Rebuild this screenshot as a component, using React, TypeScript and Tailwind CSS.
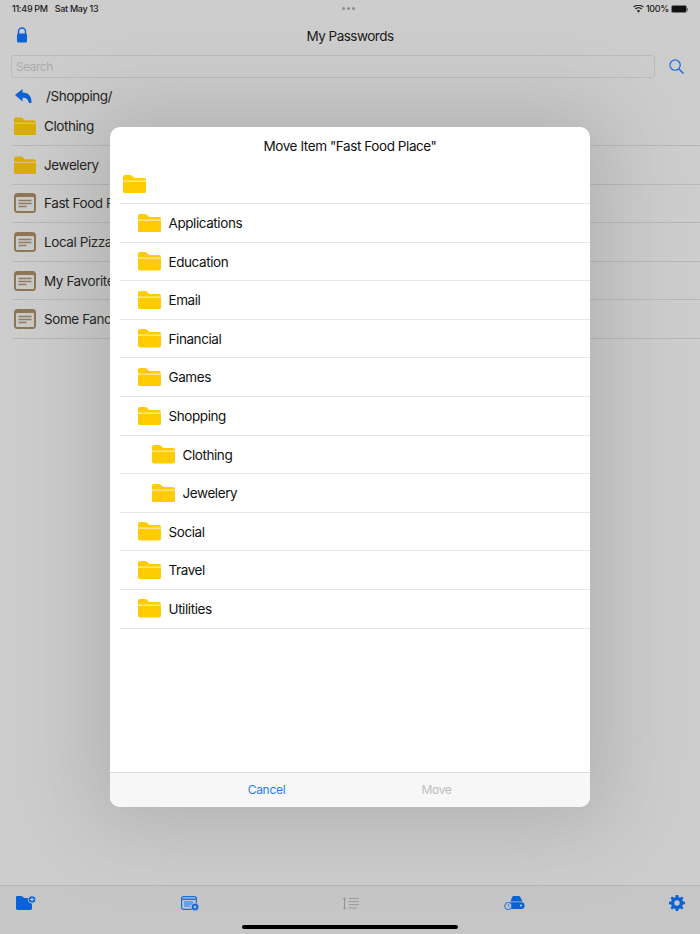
const font = { fontFamily: "Inter, 'Noto Sans', sans-serif" };

function Folder({ color = "#ffcc00", line = "#fff", className = "" }: { color?: string; line?: string; className?: string }) {
  return (
    <svg viewBox="0 0 23 18.5" className={className}>
      <path d="M0 2C0 .8.8 0 2 0h5c.9 0 1.5.3 2.1.9L11.2 3h9.8c1.2 0 2 .8 2 2V16.5c0 1.2-.8 2-2 2H2c-1.2 0-2-.8-2-2Z" fill={color} />
      <rect x="0" y="5.7" width="23" height="0.8" fill={line} />
    </svg>
  );
}

function NoteIcon({ className = "" }: { className?: string }) {
  return (
    <svg viewBox="0 0 22 20" className={className}>
      <rect x="0" y="0" width="22" height="20" rx="3.5" fill="#8f7656" />
      <rect x="2" y="4" width="18" height="14" rx="1" fill="#cbcbc8" />
      <path d="M4.5 7.5h13M4.5 10.5h13M4.5 13.5h8" stroke="#8f7c63" strokeWidth="1.3" />
    </svg>
  );
}

function Row({ icon, label }: { icon: "folder" | "note"; label: string }) {
  return (
    <div className="ml-3 flex h-[38.6px] items-center gap-2 border-b border-[#b8b8b8]">
      {icon === "folder" ? (
        <Folder color="#d9ae08" line="#d8d2b0" className="ml-[2px] h-[18.5px] w-[22px] shrink-0" />
      ) : (
        <NoteIcon className="ml-[2px] h-[20px] w-[22px] shrink-0" />
      )}
      <span className="text-[13.5px] tracking-[-0.42px] text-[#1c1c1c]">{label}</span>
    </div>
  );
}

function ModalRow({ indent, label }: { indent: number; label: string }) {
  const pad = indent === 0 ? "pl-[3px]" : indent === 1 ? "pl-[18px]" : "pl-[32px]";
  return (
    <div className={`flex h-[38.6px] items-center gap-[7.5px] border-b border-[#e6e6e6] ${pad}`}>
      <Folder className="h-[18.5px] w-[23px] shrink-0" />
      <span className="pt-[0.6px] text-[13.5px] tracking-[-0.42px] text-[#111]">{label}</span>
    </div>
  );
}

const folders: [number, string][] = [
  [1, "Applications"],
  [1, "Education"],
  [1, "Email"],
  [1, "Financial"],
  [1, "Games"],
  [1, "Shopping"],
  [2, "Clothing"],
  [2, "Jewelery"],
  [1, "Social"],
  [1, "Travel"],
  [1, "Utilities"],
];

export default function App() {
  return (
    <div className="relative flex h-[934px] w-[700px] flex-col overflow-hidden bg-[#cdcdcd]" style={font}>
      <div className="flex h-[17px] items-center justify-between pl-3 pr-[12px] pt-[1px] text-[9px] font-medium tracking-[-0.3px] text-[#222]">
        <div className="flex gap-[7px]">
          <span>11:49 PM</span>
          <span>Sat May 13</span>
        </div>
        <div className="flex items-center gap-[2px]">
          <svg viewBox="0 0 16 12" className="h-[8px] w-[11px]">
            <path d="M8 11.5 5.6 8.7a3.4 3.4 0 0 1 4.8 0ZM3.9 6.9a6 6 0 0 1 8.2 0l1.3-1.5a8 8 0 0 0-10.8 0ZM.9 3.8a10.4 10.4 0 0 1 14.2 0L16 2.4A12.4 12.4 0 0 0 0 2.4Z" fill="#222" />
          </svg>
          <span>100%</span>
          <div className="flex items-center">
            <div className="h-[8px] w-[16px] rounded-[2px] border border-[#777] bg-[#111]" />
            <div className="h-[3px] w-[1px] bg-[#777]" />
          </div>
        </div>
      </div>

      <div className="relative flex h-[38px] items-center justify-center px-4">
        <svg viewBox="0 0 12 16" className="absolute left-[16px] top-[10px] h-[16px] w-[12px]">
          <path d="M2.5 7V4.5a3.5 3.5 0 0 1 7 0V7" fill="none" stroke="#0b62d6" strokeWidth="1.4" />
          <rect x="1" y="6.5" width="10" height="9" rx="1.5" fill="#0b62d6" />
        </svg>
        <span className="text-[13.5px] tracking-[-0.5px] text-[#1a1a1a]">My Passwords</span>
      </div>

      <div className="flex items-center pl-[11px] pr-[14px]">
        <div className="flex h-[23px] w-[644px] items-center rounded-[3px] border border-[#bcbcbc] px-[4px] text-[12px] tracking-[-0.5px] text-[#acacac]">
          Search
        </div>
        <svg viewBox="0 0 16 16" className="ml-[14px] h-[15px] w-[15px]">
          <circle cx="6.5" cy="6.5" r="5.5" fill="none" stroke="#1a6fe0" strokeWidth="1.3" />
          <path d="M10.6 10.6 15.4 15.4" stroke="#1a6fe0" strokeWidth="1.6" />
        </svg>
      </div>

      <div className="mt-[4px] flex h-[27px] items-center pl-[15px]">
        <svg viewBox="0 0 17 14" className="h-[14px] w-[17px]">
          <path d="M7.5 0 0 6l7.5 6.5V8.8c3.6-.2 5.6 1.4 6.5 5.2h2.5C16.8 7.5 13.5 3.6 7.5 3.6Z" fill="#0b62d6" />
        </svg>
        <span className="ml-[14px] pt-[1px] text-[13.5px] tracking-[-0.45px] text-[#1c1c1c]">/Shopping/</span>
      </div>

      <div className="mt-[-1.5px]">
        <Row icon="folder" label="Clothing" />
        <Row icon="folder" label="Jewelery" />
        <Row icon="note" label="Fast Food Place" />
        <Row icon="note" label="Local Pizza" />
        <Row icon="note" label="My Favorite" />
        <Row icon="note" label="Some Fancy" />
      </div>

      <div className="mt-auto h-[49px] border-t border-[#b6b6b6] bg-[#c6c6c6]">
        <div className="flex h-[34px] items-center justify-between pl-[16px] pr-[15px]">
          <svg viewBox="0 0 20 14" className="h-[14px] w-[20px]">
            <path d="M0 1.2C0 .5.5 0 1.2 0h4c.6 0 1 .2 1.4.6L8 2h6.6c.8 0 1.4.6 1.4 1.4V12.6c0 .8-.6 1.4-1.4 1.4H1.4C.6 14 0 13.4 0 12.6Z" fill="#0b62d6" />
            <circle cx="16" cy="3.5" r="3.8" fill="#0b62d6" stroke="#c6c6c6" strokeWidth="0.9" />
            <path d="M14 3.5h4M16 1.5v4" stroke="#d5e3f5" strokeWidth="0.9" />
          </svg>
          <svg viewBox="0 0 18 15" className="h-[15px] w-[18px]">
            <rect x="0.6" y="0.6" width="14.8" height="12.8" rx="2" fill="none" stroke="#1a6fe0" strokeWidth="1.2" />
            <path d="M1 3.2h14" stroke="#1a6fe0" strokeWidth="1.4" />
            <path d="M3 6h9M3 8h9M3 10h6" stroke="#1a6fe0" strokeWidth="0.9" />
            <circle cx="14" cy="11" r="3.8" fill="#0b62d6" stroke="#c6c6c6" strokeWidth="0.7" />
            <path d="M12.2 11h3.6M14 9.2v3.6" stroke="#d5e3f5" strokeWidth="0.8" />
          </svg>
          <svg viewBox="0 0 16 13" className="h-[13px] w-[16px]">
            <path d="M1.5 1v11M0 2.5 1.5 .8 3 2.5M0 10.5 1.5 12.2 3 10.5" fill="none" stroke="#8f8f8f" strokeWidth="0.9" />
            <path d="M5.5 1.5H16M5.5 4.5H16M5.5 7.5H16M5.5 11H14" stroke="#9a9a9a" strokeWidth="0.9" />
          </svg>
          <svg viewBox="0 0 21 14" className="h-[14px] w-[21px]">
            <path d="M6.5 5.5 8 1.4C8.3.6 9 0 10 0h4.5c1 0 1.7.6 2 1.4L18.5 5.5Z" fill="#0b62d6" />
            <rect x="4.5" y="6.2" width="16" height="6.8" rx="3" fill="#0b62d6" />
            <circle cx="17" cy="9.6" r="1" fill="#d5e3f5" />
            <circle cx="4.3" cy="10" r="3.6" fill="#c6c6c6" stroke="#1a6fe0" strokeWidth="1" />
            <path d="M4.3 8v2l1.3.8" fill="none" stroke="#1a6fe0" strokeWidth="0.8" />
          </svg>
          <svg viewBox="0 0 24 24" className="h-[16px] w-[16px]">
            <path
              d="M13.8 0h-3.6l-.6 3.2a9 9 0 0 0-2.3 1L4.6 2.3 2.3 4.6l1.9 2.7a9 9 0 0 0-1 2.3L0 10.2v3.6l3.2.6a9 9 0 0 0 1 2.3l-1.9 2.7 2.3 2.3 2.7-1.9a9 9 0 0 0 2.3 1l.6 3.2h3.6l.6-3.2a9 9 0 0 0 2.3-1l2.7 1.9 2.3-2.3-1.9-2.7a9 9 0 0 0 1-2.3l3.2-.6v-3.6l-3.2-.6a9 9 0 0 0-1-2.3l1.9-2.7-2.3-2.3-2.7 1.9a9 9 0 0 0-2.3-1ZM12 8a4 4 0 1 1 0 8 4 4 0 0 1 0-8Z"
              fill="#0b62d6"
              fillRule="evenodd"
            />
          </svg>
        </div>
        <div className="mx-auto mt-[5px] h-[4px] w-[216px] rounded-full bg-black" />
      </div>

      <div className="absolute left-[342px] top-[7px] flex gap-[2px]">
        <div className="h-[3px] w-[3px] rounded-full bg-[#8c8c8c]" />
        <div className="h-[3px] w-[3px] rounded-full bg-[#8c8c8c]" />
        <div className="h-[3px] w-[3px] rounded-full bg-[#8c8c8c]" />
      </div>

      <div className="absolute left-[110px] top-[127px] flex h-[680px] w-[480px] flex-col rounded-[10px] bg-white shadow-[0_0_80px_20px_rgba(100,105,95,0.26)]">
        <div className="flex h-[38.4px] items-center justify-center text-[13.5px] tracking-[-0.42px] text-[#111]">
          Move Item "Fast Food Place"
        </div>
        <div className="ml-[10px] flex-1">
          <div className="flex h-[38.6px] items-center border-b border-[#e6e6e6] pl-[3px]">
            <Folder className="h-[18.5px] w-[23px]" />
          </div>
          {folders.map(([indent, label]) => (
            <ModalRow key={label + indent} indent={indent} label={label} />
          ))}
        </div>
        <div className="flex h-[35px] items-center rounded-b-[10px] border-t border-[#dcdcdc] bg-[#f7f7f7] pl-[71.5px] text-[12px] tracking-[-0.3px]">
          <div className="w-[170px] text-center text-[#1e7ff0]">Cancel</div>
          <div className="w-[170px] text-center text-[#bdbdbd]">Move</div>
        </div>
      </div>
    </div>
  );
}
